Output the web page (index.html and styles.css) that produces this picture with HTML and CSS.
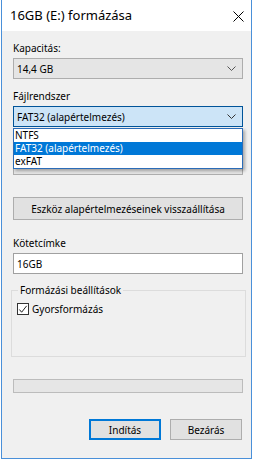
FILE: index.html
```html
<!DOCTYPE html>
<html lang="hu">
<head>
<meta charset="utf-8">
<title>16GB (E:) formázása</title>
<link rel="stylesheet" href="styles.css">
</head>
<body>
<div class="window">
  <div class="titlebar">
    <span class="title">16GB (E:) formázása</span>
    <svg class="close" width="11" height="11" viewBox="0 0 11 11"><path d="M0.5 0.5 L10.5 10.5 M10.5 0.5 L0.5 10.5" stroke="#000" stroke-width="1" fill="none"/></svg>
  </div>
  <div class="content">
    <div class="lbl">Kapacitás:</div>
    <div class="combo"><span>14,4 GB</span><svg class="chev" width="9" height="5" viewBox="0 0 9 5"><path d="M0.5 0.5 L4.5 4.5 L8.5 0.5" stroke="#555" fill="none"/></svg></div>

    <div class="lbl gap">Fájlrendszer</div>
    <div class="dropwrap">
      <div class="combo open"><span>FAT32 (alapértelmezés)</span><svg class="chev" width="9" height="5" viewBox="0 0 9 5"><path d="M0.5 0.5 L4.5 4.5 L8.5 0.5" stroke="#333" fill="none"/></svg></div>
      <ul class="droplist">
        <li>NTFS</li>
        <li class="sel">FAT32 (alapértelmezés)</li>
        <li>exFAT</li>
      </ul>
    </div>

    <div class="lbl gap covered">Lefoglalási egység mérete</div>
    <div class="combo"><span class="covered">32 kilobájt</span><svg class="chev" width="9" height="5" viewBox="0 0 9 5"><path d="M0.5 0.5 L4.5 4.5 L8.5 0.5" stroke="#555" fill="none"/></svg></div>

    <div class="btn wide">Eszköz alapértelmezéseinek visszaállítása</div>

    <div class="lbl gap2">Kötetcímke</div>
    <div class="input">16GB</div>

    <fieldset class="group">
      <legend>Formázási beállítások</legend>
      <div class="check">
        <span class="box"><svg width="11" height="11" viewBox="0 0 11 11"><path d="M1.5 5.5 L4 8.5 L9.5 1.5" stroke="#222" stroke-width="1.1" fill="none"/></svg></span>
        <span>Gyorsformázás</span>
      </div>
    </fieldset>

    <div class="progress"></div>

    <div class="buttons">
      <div class="btn default">Indítás</div>
      <div class="btn">Bezárás</div>
    </div>
  </div>
</div>
</body>
</html>
```

FILE: styles.css
```css
* { box-sizing: border-box; }
html, body { margin: 0; padding: 0; background: #ffffff; }
body {
  font-family: "Noto Sans", "Liberation Sans", sans-serif;
  font-size: 10px;
  color: #000;
}
.window {
  width: 251px;
  height: 459px;
  margin-left: 1px;
  border: 1px solid #4a90d9;
  border-top: none;
  display: flex;
  flex-direction: column;
  background: #f0f0f0;
}
.titlebar {
  height: 31px;
  flex: none;
  background: #fff;
  display: flex;
  align-items: center;
  justify-content: space-between;
  padding: 0 7px 1px 8px;
}
.title { font-size: 13px; }
.close { margin-top: 2px; }
.content {
  flex: 1;
  padding: 10px 8px 0 11px;
  display: flex;
  flex-direction: column;
}
.lbl {
  height: 15px;
  line-height: 15px;
  margin-bottom: 2px;
}
.lbl.gap { margin-top: 10px; }
.lbl.gap2 { margin-top: 16px; }
.covered { visibility: hidden; }
.combo {
  height: 21px;
  border: 1px solid #adadad;
  background: #e5e5e5;
  display: flex;
  align-items: center;
  justify-content: space-between;
  padding: 0 6px 0 3px;
}
.combo.open {
  background: #cce4f7;
  border-color: #005499;
}
.dropwrap { position: relative; }
.droplist {
  position: absolute;
  left: 0;
  right: 0;
  top: 22px;
  margin: 0;
  padding: 0;
  list-style: none;
  background: #fff;
  border: 1px solid #2b6cb8;
  box-shadow: 2px 2px 3px rgba(0,0,0,0.3);
  z-index: 2;
}
.droplist li {
  height: 13px;
  line-height: 13px;
  padding-left: 1px;
}
.droplist li.sel { background: #0078d7; color: #fff; }
.btn {
  height: 21px;
  border: 1px solid #adadad;
  background: #e1e1e1;
  display: flex;
  align-items: center;
  justify-content: center;
}
.btn.wide { margin-top: 22px; height: 23px; }
.input {
  height: 21px;
  border: 1px solid #a0a0a0;
  background: #fff;
  display: flex;
  align-items: center;
  padding-left: 3px;
}
.group {
  margin: 9px -3px 0 -2px;
  padding: 0 0 0 5px;
  border: 1px solid #dcdcdc;
  height: 74px;
}
.group legend {
  padding: 0 2px;
  margin-left: 1px;
  line-height: 15px;
}
.check {
  display: flex;
  align-items: center;
  gap: 3px;
  margin-top: 4px;
}
.box {
  width: 12px;
  height: 12px;
  border: 1px solid #333;
  background: #fff;
  display: flex;
  align-items: center;
  justify-content: center;
}
.progress {
  margin-top: 22px;
  height: 14px;
  border: 1px solid #bcbcbc;
  background: #e6e6e6;
}
.buttons {
  margin-top: 26px;
  display: flex;
  justify-content: flex-end;
  gap: 9px;
  padding-right: 1px;
}
.buttons .btn { width: 72px; }
.btn.default { border: 2px solid #0078d7; }
```
